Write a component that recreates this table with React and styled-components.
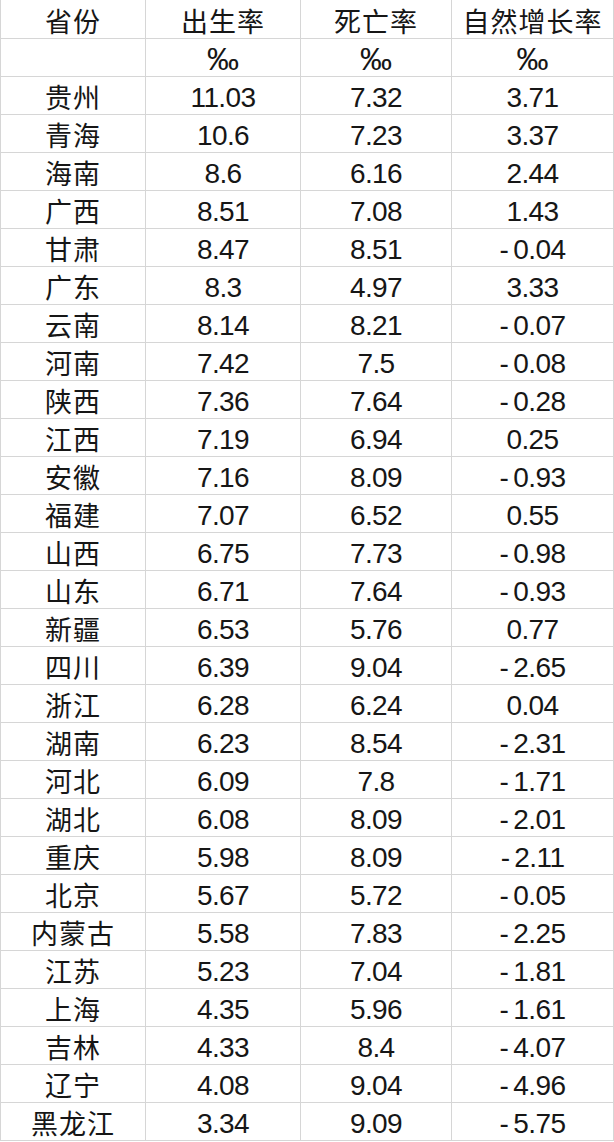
import React from "react";
import styled, { createGlobalStyle } from "styled-components";

const GlobalStyle = createGlobalStyle`
  html, body {
    margin: 0;
    padding: 0;
    background: #ffffff;
  }
`;

const rows = [
  ["贵州", "11.03", "7.32", "3.71"],
  ["青海", "10.6", "7.23", "3.37"],
  ["海南", "8.6", "6.16", "2.44"],
  ["广西", "8.51", "7.08", "1.43"],
  ["甘肃", "8.47", "8.51", "-0.04"],
  ["广东", "8.3", "4.97", "3.33"],
  ["云南", "8.14", "8.21", "-0.07"],
  ["河南", "7.42", "7.5", "-0.08"],
  ["陕西", "7.36", "7.64", "-0.28"],
  ["江西", "7.19", "6.94", "0.25"],
  ["安徽", "7.16", "8.09", "-0.93"],
  ["福建", "7.07", "6.52", "0.55"],
  ["山西", "6.75", "7.73", "-0.98"],
  ["山东", "6.71", "7.64", "-0.93"],
  ["新疆", "6.53", "5.76", "0.77"],
  ["四川", "6.39", "9.04", "-2.65"],
  ["浙江", "6.28", "6.24", "0.04"],
  ["湖南", "6.23", "8.54", "-2.31"],
  ["河北", "6.09", "7.8", "-1.71"],
  ["湖北", "6.08", "8.09", "-2.01"],
  ["重庆", "5.98", "8.09", "-2.11"],
  ["北京", "5.67", "5.72", "-0.05"],
  ["内蒙古", "5.58", "7.83", "-2.25"],
  ["江苏", "5.23", "7.04", "-1.81"],
  ["上海", "4.35", "5.96", "-1.61"],
  ["吉林", "4.33", "8.4", "-4.07"],
  ["辽宁", "4.08", "9.04", "-4.96"],
  ["黑龙江", "3.34", "9.09", "-5.75"],
];

function App() {
  return (
    <>
      <GlobalStyle />
      <Sheet>
        <colgroup>
          <col style={{ width: 145 }} />
          <col style={{ width: 155 }} />
          <col style={{ width: 151 }} />
          <col />
        </colgroup>
        <tbody>
          <Row>
            <Cell cjk>省份</Cell>
            <Cell cjk>出生率</Cell>
            <Cell cjk>死亡率</Cell>
            <Cell cjk>自然增长率</Cell>
          </Row>
          <Row>
            <Cell />
            <UnitCell>‰</UnitCell>
            <UnitCell>‰</UnitCell>
            <UnitCell>‰</UnitCell>
          </Row>
          {rows.map(([name, birth, death, growth]) => (
            <Row key={name}>
              <Cell cjk>{name}</Cell>
              <Cell>{birth}</Cell>
              <Cell>{death}</Cell>
              <Cell>{growth.replace("-", "-\u2009")}</Cell>
            </Row>
          ))}
        </tbody>
      </Sheet>
    </>
  );
}

export default App;

const Sheet = styled.table`
  width: 614px;
  table-layout: fixed;
  border-collapse: collapse;
  color: #161616;
`;

const Row = styled.tr`
  height: 38px;
`;

const Cell = styled.td`
  height: 38px;
  padding: ${(p) => (p.cjk ? "3px 0 0" : "5px 0 0")};
  box-sizing: border-box;
  border: 1px solid #d6d6d6;
  border-top: none;
  text-align: center;
  vertical-align: middle;
  white-space: pre;
  font-family: ${(p) =>
    p.cjk
      ? '"Noto Sans CJK SC", sans-serif'
      : '"Liberation Sans", "Noto Sans CJK SC", sans-serif'};
  font-size: ${(p) => (p.cjk ? "27px" : "28px")};
  letter-spacing: ${(p) => (p.cjk ? "1px" : "-0.6px")};
  line-height: 1;
`;

const UnitCell = styled(Cell)`
  font-size: 32px;
  letter-spacing: 0;
  padding-top: 4px;
`;
